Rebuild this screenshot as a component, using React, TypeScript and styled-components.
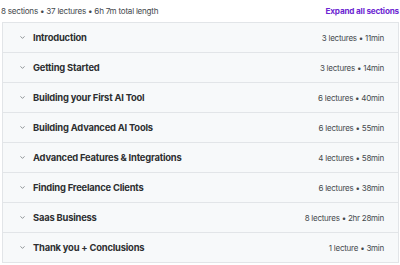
import React from "react";
import styled, { createGlobalStyle } from "styled-components";

const GlobalStyle = createGlobalStyle`
  html, body {
    margin: 0;
    padding: 0;
    background: #ffffff;
  }
  body {
    font-family: Inter, "Noto Sans", sans-serif;
    color: #2d2f31;
  }
`;

const sections = [
  { title: "Introduction", lectures: 3, length: "11min" },
  { title: "Getting Started", lectures: 3, length: "14min" },
  { title: "Building your First AI Tool", lectures: 6, length: "40min" },
  { title: "Building Advanced AI Tools", lectures: 6, length: "55min" },
  { title: "Advanced Features & Integrations", lectures: 4, length: "58min" },
  { title: "Finding Freelance Clients", lectures: 6, length: "38min" },
  { title: "Saas Business", lectures: 8, length: "2hr 28min" },
  { title: "Thank you + Conclusions", lectures: 1, length: "3min" },
];

const Wrapper = styled.div`
  width: 400px;
  height: 265px;
  overflow: hidden;
  box-sizing: border-box;
  padding: 0 1px 0 2px;
`;

const Summary = styled.div`
  display: flex;
  justify-content: space-between;
  align-items: center;
  height: 22px;
  margin-left: -1px;
  font-size: 8.1px;
  letter-spacing: -0.25px;
  color: #45494d;
`;

const ExpandAll = styled.button`
  border: none;
  background: none;
  padding: 0;
  font-family: inherit;
  font-size: 8.2px;
  letter-spacing: -0.2px;
  font-weight: 700;
  color: #6d28d2;
  cursor: pointer;
`;

const List = styled.ul`
  list-style: none;
  margin: 0;
  padding: 0;
  border: 1px solid #e2e5e8;
  border-bottom: none;
`;

const Row = styled.li`
  display: flex;
  align-items: center;
  height: 29px;
  padding: 0 14px 0 16px;
  background: #f7f9fa;
  border-bottom: 1px solid #e2e5e8;
`;

const Chevron = styled.svg`
  width: 7px;
  height: 7px;
  flex-shrink: 0;
  margin-right: 7px;
  color: #6a6f73;
`;

const Title = styled.span`
  flex: 1;
  font-size: 9.4px;
  letter-spacing: -0.2px;
  font-weight: 700;
  color: #2d2f31;
`;

const Meta = styled.span`
  font-size: 8px;
  letter-spacing: -0.25px;
  color: #45494d;
`;

export default function App() {
  return (
    <>
      <GlobalStyle />
      <Wrapper>
        <Summary>
          <span>8 sections • 37 lectures • 6h 7m total length</span>
          <ExpandAll>Expand all sections</ExpandAll>
        </Summary>
        <List>
          {sections.map((s) => (
            <Row key={s.title}>
              <Chevron viewBox="0 0 24 24" fill="none" stroke="currentColor" strokeWidth="2.5" strokeLinecap="round" strokeLinejoin="round">
                <path d="M6 9l6 6 6-6" />
              </Chevron>
              <Title>{s.title}</Title>
              <Meta>
                {s.lectures} {s.lectures === 1 ? "lecture" : "lectures"} • {s.length}
              </Meta>
            </Row>
          ))}
        </List>
      </Wrapper>
    </>
  );
}
